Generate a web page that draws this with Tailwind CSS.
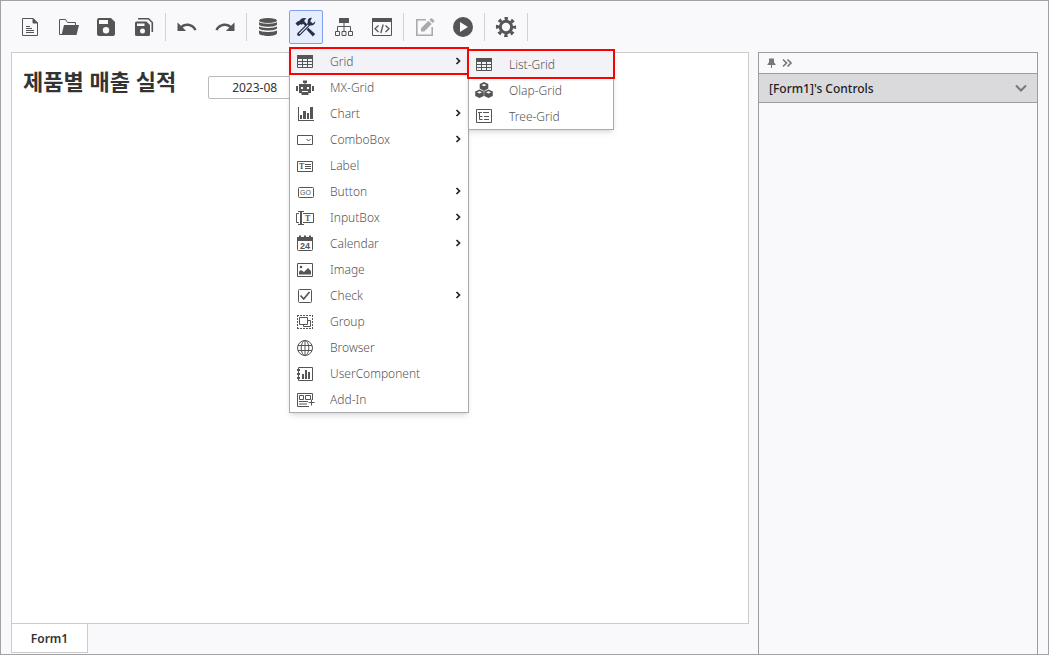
<!DOCTYPE html>
<html lang="ko">

<head>
    <meta charset="UTF-8">
    <meta name="viewport" content="width=device-width, initial-scale=1.0">
    <title>Form Designer</title>
    <script src="https://cdn.jsdelivr.net/npm/@tailwindcss/browser@4"></script>
</head>

<body class="flex flex-col h-screen border border-[#a2a2a4] bg-[#f9f9fc] text-[#222] text-[12px] font-['Noto_Sans','Noto_Sans_CJK_KR',sans-serif]">
    <!-- Toolbar -->
    <header class="flex items-center gap-1 h-[51px] pl-3 text-[#555]">
        <button aria-label="New" class="flex items-center justify-center size-[34px] rounded-xs">
            <svg class="size-6" viewBox="0 0 24 24" fill="none" stroke="currentColor">
                <path d="M4.5 3.5h10.500l4.500 4.500v12.500h-15z" />
                <path d="M15 3.5V8h4.500z" fill="currentColor" />
                <path d="M8 11.5h4M8 13.5h6M8 15.5h8M8 17.5h8" />
            </svg>
        </button>
        <button aria-label="Open" class="flex items-center justify-center size-[34px] rounded-xs">
            <svg class="size-6" viewBox="0 0 24 24" fill="none" stroke="currentColor">
                <path d="M3.500 19.500V4.500h6l2 3h8V10" />
                <path d="M3.500 19.500h3" />
                <path d="M8 10h15l-2.500 10H5.500z" fill="currentColor" stroke="none" />
            </svg>
        </button>
        <button aria-label="Save" class="flex items-center justify-center size-[34px] rounded-xs">
            <svg class="size-6" viewBox="0 0 24 24" fill="currentColor">
                <path fill-rule="evenodd" d="M5 3h12l4 4v12a2 2 0 0 1-2 2H5a2 2 0 0 1-2-2V5a2 2 0 0 1 2-2zM5 5v4h9V5zM12 12a3.200 3.200 0 1 0 0 6.400a3.200 3.200 0 0 0 0-6.400z" />
            </svg>
        </button>
        <button aria-label="Save all" class="flex items-center justify-center size-[34px] rounded-xs">
            <svg class="size-6" viewBox="0 0 24 24" fill="currentColor">
                <path fill-rule="evenodd" d="M4.500 6.500h10l3.500 3.500v9.500a1.500 1.500 0 0 1-1.500 1.500h-12A1.500 1.500 0 0 1 3 19.500V8a1.500 1.500 0 0 1 1.500-1.500zM5 8.500v2.500h7.500V8.500zM10.500 13.500a2.500 2.500 0 1 0 0 5a2.500 2.500 0 0 0 0-5z" />
                <path d="M6 3.800h10.500L20.300 7.500V17" fill="none" stroke="currentColor" stroke-width="1.600" />
            </svg>
        </button>
        <span class="w-px h-7 bg-[#d2d2d6]"></span>
        <button aria-label="Undo" class="flex items-center justify-center size-[34px] rounded-xs">
            <svg class="size-6" viewBox="0 0 24 24" fill="currentColor">
                <path d="M2.500 7.500v8.500h8.500L7.800 12.500c3.500-2.800 9.500-1.800 11.500 3l2.300-.8C19 8.300 10.800 6.500 6 10.700z" />
            </svg>
        </button>
        <button aria-label="Redo" class="flex items-center justify-center size-[34px] rounded-xs">
            <svg class="size-6" viewBox="0 0 24 24" fill="currentColor">
                <path d="M21.500 7.500v8.500h-8.500L16.200 12.500c-3.500-2.800-9.500-1.800-11.500 3l-2.300-.8C5 8.300 13.200 6.500 18 10.700z" />
            </svg>
        </button>
        <span class="w-px h-7 bg-[#d2d2d6]"></span>
        <button aria-label="Data" class="flex items-center justify-center size-[34px] rounded-xs">
            <svg class="size-6" viewBox="0 0 24 24" fill="currentColor">
                <ellipse cx="12" cy="5.500" rx="9" ry="2.500" />
                <path d="M3 7c2 2.300 16 2.300 18 0v2.500c-1 3-17 3-18 0zM3 11.300c2 2.300 16 2.300 18 0v2c-1 3-17 3-18 0zM3 15.200c2 2.300 16 2.300 18 0v3c-1 3.700-17 3.700-18 0z" />
            </svg>
        </button>
        <!-- Components button with its drop-down -->
        <div class="relative">
            <button aria-label="Components" aria-expanded="true" class="flex items-center justify-center size-[34px] rounded-xs border border-[#7f9ff0] bg-[#e6edfd] text-[#26304a]">
                <svg class="size-6" viewBox="0 0 24 24" fill="currentColor">
                    <path d="M1.500 8.500L4 6l.8.300L7.300 3.700q2.500-1.500 5.200-.2L10.300 5.200l.3 2L8 9.800 6.300 9.300 3.800 11z" />
                    <path d="M8.500 8l2-1.500 3 3.300-1.800 1.700zM14.300 12.800l6.900 6.200-2.400 2.400-6.300-7z" />
                    <path d="M18 2.800q-3.800-.3-4.300 3.200v2L3.300 18.300q-.9 2.700 2.200 2.600L16 10.500q4.700.6 5.400-4.300L18.700 8.500l-2.500-2.200z" />
                    <path d="M14.200 9.900L5.300 18.800" stroke="#e6edfd" stroke-width="1.200" />
                </svg>
            </button>
            <ul id="menu" class="absolute z-10 left-0 top-full mt-[3px] w-[180px] border border-[#aaa] bg-white shadow-md">
                <li class="relative">
                    <button class="flex items-center w-full h-[26px] pl-[5px] pr-1.5 gap-[15px] bg-[#f2f2f7] outline-2 outline-[#ff0000] -outline-offset-1">
                        <svg class="size-5 text-[#555]" viewBox="0 0 20 20" fill="none" stroke="currentColor">
                            <path d="M2 4h16v4H2z" fill="currentColor" stroke="none" />
                            <path d="M2.500 8v8.500h15V8M2 10.500h16M2 13.500h16M7.500 8v8.500M12.500 8v8.500" />
                        </svg>
                        <span class="flex-1 pt-0.5 text-left font-light">Grid</span>
                        <svg class="size-2" viewBox="0 0 8 8" fill="none" stroke="#222" stroke-width="1.700"><path d="M2.500 1l3 3-3 3" /></svg>
                    </button>
                    <ul class="absolute left-[178px] top-0.5 w-[146px] border border-[#aaa] bg-white shadow-md">
                        <li>
                            <button class="flex items-center w-full h-[26px] pl-[5px] pr-1.5 gap-[15px] bg-[#f2f2f7] outline-2 outline-[#ff0000]">
                                <svg class="size-5 text-[#555]" viewBox="0 0 20 20" fill="none" stroke="currentColor">
                                    <path d="M2 4h16v4H2z" fill="currentColor" stroke="none" />
                                    <path d="M2.500 8v8.500h15V8M2 10.500h16M2 13.500h16M7.500 8v8.500M12.500 8v8.500" />
                                </svg>
                                <span class="pt-0.5 font-light">List-Grid</span>
                            </button>
                        </li>
                        <li>
                            <button class="flex items-center w-full h-[26px] pl-[5px] pr-1.5 gap-[15px]">
                                <svg class="size-5 text-[#555]" viewBox="0 0 20 20" fill="currentColor">
                                    <path d="M10 2l4.300 2v4.500L10 11 5.700 8.500V4zM5.500 9.500l4.300 2v4.500L5.500 18l-4.300-2v-4.500zM14.500 9.500l4.300 2v4.500L14.500 18l-4.300-2v-4.500z" />
                                    <path d="M7.500 5l2.500 1.200L12.500 5 10 4zM3 12.200l2.500 1.200L8 12.200l-2.500-1zM12 12.200l2.500 1.200 2.500-1.200-2.500-1z" fill="#fff" />
                                </svg>
                                <span class="pt-0.5 font-light">Olap-Grid</span>
                            </button>
                        </li>
                        <li>
                            <button class="flex items-center w-full h-[26px] pl-[5px] pr-1.5 gap-[15px]">
                                <svg class="size-5 text-[#555]" viewBox="0 0 20 20" fill="none" stroke="currentColor">
                                    <path d="M2.500 3.500h15v13h-15zM4 6.500h4M9 6.500h6M5.500 6v7.500h3M5.500 10.500h3M10 10.500h5M10 13.500h5" />
                                </svg>
                                <span class="pt-0.5 font-light">Tree-Grid</span>
                            </button>
                        </li>
                    </ul>
                </li>
                <li>
                    <button class="flex items-center w-full h-[26px] pl-[5px] pr-1.5 gap-[15px]">
                        <svg class="size-5 text-[#555]" viewBox="0 0 20 20" fill="currentColor">
                            <path fill-rule="evenodd" d="M9.500 7V6H8V3.500h4V6h-1.500v1H16v9h-2.500v2h-7v-2H4V7zM6 10v2h2v-2zM12 10v2h2v-2zM7 14v1h6v-1z" />
                            <path d="M1 9h2v5H1zM17 9h2v5h-2z" />
                        </svg>
                        <span class="pt-0.5 font-light">MX-Grid</span>
                    </button>
                </li>
                <li>
                    <button class="flex items-center w-full h-[26px] pl-[5px] pr-1.5 gap-[15px]">
                        <svg class="size-5 text-[#555]" viewBox="0 0 20 20" fill="currentColor">
                            <path d="M3 4h1v13h15v1H3zM5 12h2v4H5zM8 8h3v8H8zM12 10h2v6h-2zM15 4h3v12h-3z" />
                        </svg>
                        <span class="flex-1 pt-0.5 text-left font-light">Chart</span>
                        <svg class="size-2" viewBox="0 0 8 8" fill="none" stroke="#222" stroke-width="1.700"><path d="M2.500 1l3 3-3 3" /></svg>
                    </button>
                </li>
                <li>
                    <button class="flex items-center w-full h-[26px] pl-[5px] pr-1.5 gap-[15px]">
                        <svg class="size-5 text-[#555]" viewBox="0 0 20 20" fill="none" stroke="currentColor">
                            <path d="M2.500 6.500h15v9h-15zM11.500 10l2 2 2-2" />
                        </svg>
                        <span class="flex-1 pt-0.5 text-left font-light">ComboBox</span>
                        <svg class="size-2" viewBox="0 0 8 8" fill="none" stroke="#222" stroke-width="1.700"><path d="M2.500 1l3 3-3 3" /></svg>
                    </button>
                </li>
                <li>
                    <button class="flex items-center w-full h-[26px] pl-[5px] pr-1.5 gap-[15px]">
                        <svg class="size-5 text-[#555]" viewBox="0 0 20 20" fill="none" stroke="currentColor">
                            <path d="M2.500 6.500h15v10h-15zM10 9.500h6M10 11.500h6M10 13.500h6" />
                            <text x="4" y="14" font-size="8" font-weight="700" font-family="Liberation Serif" fill="currentColor" stroke="none">T</text>
                        </svg>
                        <span class="pt-0.5 font-light">Label</span>
                    </button>
                </li>
                <li>
                    <button class="flex items-center w-full h-[26px] pl-[5px] pr-1.5 gap-[15px]">
                        <svg class="size-5 text-[#555]" viewBox="0 0 20 20" fill="none" stroke="currentColor">
                            <rect x="3.500" y="6.500" width="15" height="10" rx="1" />
                            <text x="5" y="14" font-size="7" font-family="Liberation Sans" fill="currentColor" stroke="none">GO</text>
                        </svg>
                        <span class="flex-1 pt-0.5 text-left font-light">Button</span>
                        <svg class="size-2" viewBox="0 0 8 8" fill="none" stroke="#222" stroke-width="1.700"><path d="M2.500 1l3 3-3 3" /></svg>
                    </button>
                </li>
                <li>
                    <button class="flex items-center w-full h-[26px] pl-[5px] pr-1.5 gap-[15px]">
                        <svg class="size-5 text-[#555]" viewBox="0 0 20 20" fill="none" stroke="currentColor">
                            <path d="M4 6.500H1.500v9H4M8 6.500h10.500v9H8" />
                            <path d="M3 4.500h6M3 17.500h6" />
                            <path d="M6 4v13" stroke-width="2" />
                            <text x="10" y="14" font-size="8" font-weight="700" font-family="Liberation Serif" fill="currentColor" stroke="none">T</text>
                        </svg>
                        <span class="flex-1 pt-0.5 text-left font-light">InputBox</span>
                        <svg class="size-2" viewBox="0 0 8 8" fill="none" stroke="#222" stroke-width="1.700"><path d="M2.500 1l3 3-3 3" /></svg>
                    </button>
                </li>
                <li>
                    <button class="flex items-center w-full h-[26px] pl-[5px] pr-1.5 gap-[15px]">
                        <svg class="size-5 text-[#555]" viewBox="0 0 20 20" fill="none" stroke="currentColor">
                            <rect x="2.500" y="4.500" width="15" height="13" rx="1" />
                            <path d="M2 4h2v1h2V4h3v1h2V4h3v1h2V4h2v4H2zM4 2.500h2v2H4zM9 2.500h2v2H9zM14 2.500h2v2h-2z" fill="currentColor" stroke="none" />
                            <text x="5" y="16" font-size="9" font-weight="700" font-family="Liberation Sans" fill="currentColor" stroke="none">24</text>
                        </svg>
                        <span class="flex-1 pt-0.5 text-left font-light">Calendar</span>
                        <svg class="size-2" viewBox="0 0 8 8" fill="none" stroke="#222" stroke-width="1.700"><path d="M2.500 1l3 3-3 3" /></svg>
                    </button>
                </li>
                <li>
                    <button class="flex items-center w-full h-[26px] pl-[5px] pr-1.5 gap-[15px]">
                        <svg class="size-5 text-[#555]" viewBox="0 0 20 20" fill="none" stroke="currentColor">
                            <path d="M2.500 4.500h15v13h-15z" />
                            <path d="M4 15.500v-3l2-1.500 3 2L13 9l3 3v3.500z" fill="currentColor" stroke="none" />
                            <circle cx="6" cy="8" r="1.300" fill="currentColor" stroke="none" />
                        </svg>
                        <span class="pt-0.5 font-light">Image</span>
                    </button>
                </li>
                <li>
                    <button class="flex items-center w-full h-[26px] pl-[5px] pr-1.5 gap-[15px]">
                        <svg class="size-5 text-[#555]" viewBox="0 0 20 20" fill="none" stroke="currentColor">
                            <rect x="3.500" y="4.500" width="13" height="13" rx="1" />
                            <path d="M5.500 10.500l3.200 3.500 5.800-7" stroke-width="1.700" />
                        </svg>
                        <span class="flex-1 pt-0.5 text-left font-light">Check</span>
                        <svg class="size-2" viewBox="0 0 8 8" fill="none" stroke="#222" stroke-width="1.700"><path d="M2.500 1l3 3-3 3" /></svg>
                    </button>
                </li>
                <li>
                    <button class="flex items-center w-full h-[26px] pl-[5px] pr-1.5 gap-[15px]">
                        <svg class="size-5 text-[#555]" viewBox="0 0 20 20" fill="none" stroke="currentColor">
                            <path d="M2 4.500h16M2 17.500h16M2.500 4v14M17.500 4v14" stroke-dasharray="2 1" />
                            <path d="M4.500 6.500h8v7h-8zM12.500 9.500h3v6h-7v-2" />
                        </svg>
                        <span class="pt-0.5 font-light">Group</span>
                    </button>
                </li>
                <li>
                    <button class="flex items-center w-full h-[26px] pl-[5px] pr-1.5 gap-[15px]">
                        <svg class="size-5 text-[#555]" viewBox="0 0 20 20" fill="none" stroke="currentColor">
                            <circle cx="10" cy="11" r="7.500" />
                            <ellipse cx="10" cy="11" rx="3.800" ry="7.500" />
                            <path d="M10 3.500v15M3 8.500h14M3 13.500h14" />
                        </svg>
                        <span class="pt-0.5 font-light">Browser</span>
                    </button>
                </li>
                <li>
                    <button class="flex items-center w-full h-[26px] pl-[5px] pr-1.5 gap-[15px]">
                        <svg class="size-5 text-[#555]" viewBox="0 0 20 20" fill="none" stroke="currentColor">
                            <path d="M3.500 4.500h14v13h-14z" />
                            <path d="M2 6h3v2H2zM2 10h3v2H2zM2 14h3v2H2zM7 11h2v5H7zM10 7h2v9h-2zM13 9h2v7h-2z" fill="currentColor" stroke="none" />
                        </svg>
                        <span class="pt-0.5 font-light">UserComponent</span>
                    </button>
                </li>
                <li>
                    <button class="flex items-center w-full h-[26px] pl-[5px] pr-1.5 gap-[15px]">
                        <svg class="size-5 text-[#555]" viewBox="0 0 20 20" fill="none" stroke="currentColor">
                            <path d="M17.500 11V4.500h-15v13H14M4.500 6.500h4v4h-4zM10.500 6.500h5v4h-5zM4 12.500h9M4 15h8M16.500 10.500v6M13.500 13.500h6" />
                        </svg>
                        <span class="pt-0.5 font-light">Add-In</span>
                    </button>
                </li>
            </ul>
        </div>
        <button aria-label="Structure" class="flex items-center justify-center size-[34px] rounded-xs">
            <svg class="size-6" viewBox="0 0 24 24" fill="none" stroke="currentColor">
                <path d="M7 3h10v5H7z" fill="currentColor" stroke="none" />
                <path d="M12 8v8M5.500 16v-4.500h13V16" />
                <path d="M3.500 16.500h4v4h-4zM10 16.500h4v4h-4zM16.500 16.500h4v4h-4z" />
            </svg>
        </button>
        <button aria-label="Script" class="flex items-center justify-center size-[34px] rounded-xs">
            <svg class="size-6" viewBox="0 0 24 24" fill="none" stroke="currentColor">
                <path d="M2 3h20v4H2z" fill="currentColor" stroke="none" />
                <path d="M2.500 6v14.500h19V6" />
                <path d="M8.500 10.500L5 13.700l3.500 3.200M15.500 10.500l3.500 3.200-3.500 3.200M13.200 9.500l-2.400 8.500" stroke-width="1.300" />
            </svg>
        </button>
        <span class="w-px h-7 bg-[#d2d2d6]"></span>
        <button aria-label="Edit" class="flex items-center justify-center size-[34px] rounded-xs text-[#aaa]">
            <svg class="size-6" viewBox="0 0 24 24" fill="currentColor">
                <path d="M13 4.800H3.800v15.400h15.400V12" fill="none" stroke="currentColor" stroke-width="1.600" />
                <path d="M8 13.200V16.500h3.300L18.700 9 15.400 5.700zM16.300 4.800l3.300 3.300 1.500-1.500q.6-.6 0-1.200l-2-2q-.6-.6-1.200 0z" />
            </svg>
        </button>
        <button aria-label="Run" class="flex items-center justify-center size-[34px] rounded-xs">
            <svg class="size-6" viewBox="0 0 24 24" fill="currentColor">
                <path fill-rule="evenodd" d="M12 2a10 10 0 1 0 0 20a10 10 0 0 0 0-20zM9 7v10l8-5z" />
            </svg>
        </button>
        <span class="w-px h-7 bg-[#d2d2d6]"></span>
        <button aria-label="Settings" class="flex items-center justify-center size-[34px] rounded-xs">
            <svg class="size-6" viewBox="0 0 24 24" fill="none" stroke="currentColor">
                <circle cx="12" cy="12" r="5.700" stroke-width="3" />
                <circle cx="12" cy="12" r="8.500" stroke-width="3.200" stroke-dasharray="3.338 3.338" stroke-dashoffset="1.669" />
            </svg>
        </button>
        <span class="w-px h-7 bg-[#d2d2d6]"></span>
    </header>

    <!-- Workspace -->
    <main class="flex flex-1 min-h-0 gap-[9px] px-2.5">
        <section class="flex flex-col flex-1 pb-px">
            <div class="flex flex-1 items-start gap-8 pl-[11px] pt-[11px] border border-[#ccc] bg-white">
                <h1 class="text-[22px] leading-[34px] font-bold text-[#333]">제품별 매출 실적</h1>
                <input type="text" value="2023-08" aria-label="Month" class="w-[100px] h-[23px] mt-3 pl-[23px] border border-[#bbb] rounded-xs text-[#333]">
            </div>
            <div class="flex">
                <button class="h-[30px] w-[77px] -mt-px pt-0.5 border border-[#ccc] bg-white font-semibold text-[#333]">Form1</button>
            </div>
        </section>

        <!-- Controls panel -->
        <aside class="flex flex-col w-[280px] border-x border-t border-[#9c9c9e]">
            <div class="flex items-center gap-1 h-5 pl-[7px] text-[#777]">
                <button aria-label="Pin">
                    <svg class="block size-3" viewBox="0 0 12 12" fill="currentColor">
                        <path d="M3 1.500h5v4L9.500 7v1H6v3H5V8H1.500V7L3 5.500z" />
                    </svg>
                </button>
                <button aria-label="Collapse">
                    <svg class="block size-3" viewBox="0 0 12 12" fill="none" stroke="currentColor" stroke-width="1.700">
                        <path d="M1 2.500L4.500 6 1 9.500M5.500 2.500L9 6 5.500 9.500" />
                    </svg>
                </button>
            </div>
            <button class="flex items-center justify-between h-[30px] px-2.5 border-y border-[#9c9c9e] bg-[#dadadd] font-medium text-[#222]">
                <span class="pt-0.5">[Form1]'s Controls</span>
                <svg class="size-3" viewBox="0 0 12 12" fill="none" stroke="#777" stroke-width="2"><path d="M1 3.500l5 5 5-5" /></svg>
            </button>
        </aside>
    </main>
</body>

</html>
